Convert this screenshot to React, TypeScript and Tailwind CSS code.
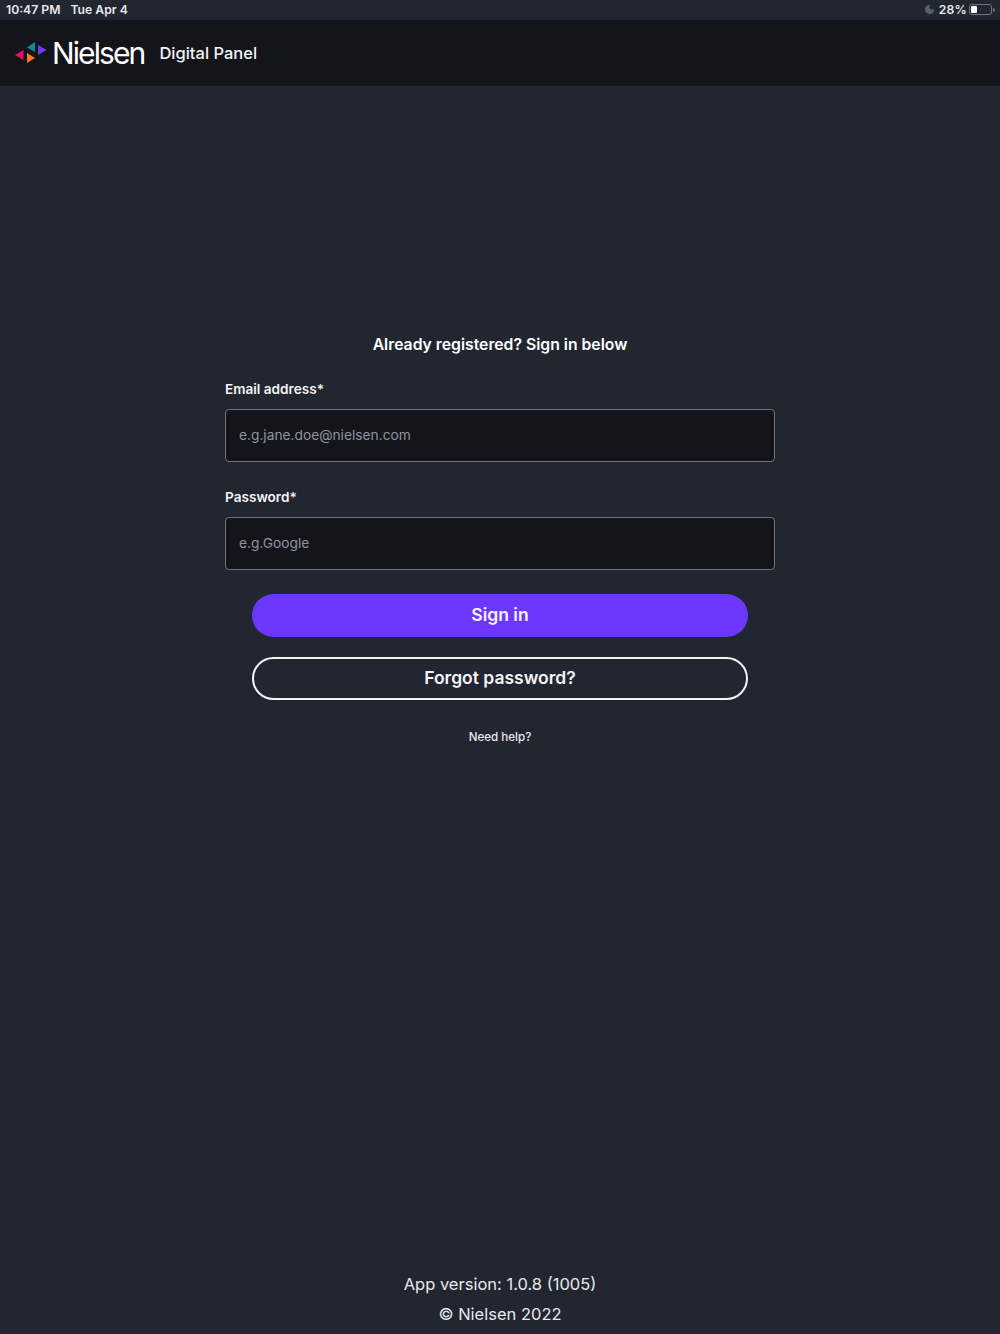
import { Moon } from 'lucide-react';

const NielsenMark = () => (
  <svg width="32" height="22" viewBox="0 0 32 22" className="block">
    <path d="M0 13 L8.5 8 L8.5 18 Z" fill="#e5105f" />
    <path d="M12 5.5 L20 0 L20 10 Z" fill="#0e8a96" />
    <path d="M23 3 L31.5 8 L23 13 Z" fill="#6d3bf5" />
    <path d="M12 11 L20 16 L12 21 Z" fill="#f47a1f" />
  </svg>
);

const StatusBar = () => (
  <div className="flex h-5 items-center justify-between bg-[#222631] pl-[6px] pr-[5px] text-[12.2px] font-semibold text-[#e8e9ec]">
    <div className="flex gap-[10px]">
      <span>10:47 PM</span>
      <span>Tue Apr 4</span>
    </div>
    <div className="flex items-center">
      <Moon className="mr-[4px] h-[11px] w-[11px] fill-[#5b5f6a] text-[#5b5f6a]" />
      <span className="mr-[2px] tracking-[0.2px]">28%</span>
      <div className="flex h-[11px] w-[23px] items-center rounded-[3px] border border-[#70747e] p-[1px]">
        <div className="h-full w-[6px] rounded-[1px] bg-white" />
      </div>
      <div className="ml-[1px] h-[4px] w-[2px] rounded-r bg-[#70747e]" />
    </div>
  </div>
);

const Field = ({ label, placeholder }: { label: string; placeholder: string }) => (
  <div className="flex flex-col">
    <label className="text-[13.6px] leading-[20px] font-semibold text-[#f4f4f6]">{label}</label>
    <div className="mt-[10px] flex h-[53px] items-center rounded-[4px] border border-[#70747e] bg-[#14151a] px-[13px] text-[13.75px] text-[#9093a0]">
      {placeholder}
    </div>
  </div>
);

export default function App() {
  return (
    <div className="flex h-[1334px] flex-col overflow-hidden bg-[#222631] font-['Inter',sans-serif] text-white">
      <StatusBar />
      <header className="flex h-[66px] items-center bg-[#14151a] pl-[15px]">
        <NielsenMark />
        <span className="ml-[5px] text-[30px] leading-none font-normal tracking-[-1.9px] text-white">Nielsen</span>
        <span className="ml-[15px] text-[16.5px] font-medium text-[#f4f4f6]">Digital Panel</span>
      </header>
      <main className="flex flex-1 flex-col items-center pt-[247px]">
        <h1 className="text-[15.75px] leading-[24px] font-semibold">Already registered? Sign in below</h1>
        <div className="mt-[22px] flex w-[550px] flex-col gap-[25px]">
          <Field label="Email address*" placeholder="e.g.jane.doe@nielsen.com" />
          <Field label="Password*" placeholder="e.g.Google" />
        </div>
        <button className="mt-[24px] h-[43px] w-[496px] rounded-full bg-[#6c37fd] text-[17.5px] font-semibold text-[#f6f3ff]">
          Sign in
        </button>
        <button className="mt-[20px] h-[43px] w-[496px] rounded-full border-2 border-[#f4f4f6] text-[17.5px] font-semibold text-[#f4f4f6]">
          Forgot password?
        </button>
        <a className="mt-[27px] text-[11.6px] leading-[20px] font-medium text-[#e8e9ec]">Need help?</a>
        <footer className="mt-auto flex flex-col items-center pb-[5px] text-[16.5px] leading-[30px] text-[#e8e9ec]">
          <span>App version: 1.0.8 (1005)</span>
          <span>© Nielsen 2022</span>
        </footer>
      </main>
    </div>
  );
}
